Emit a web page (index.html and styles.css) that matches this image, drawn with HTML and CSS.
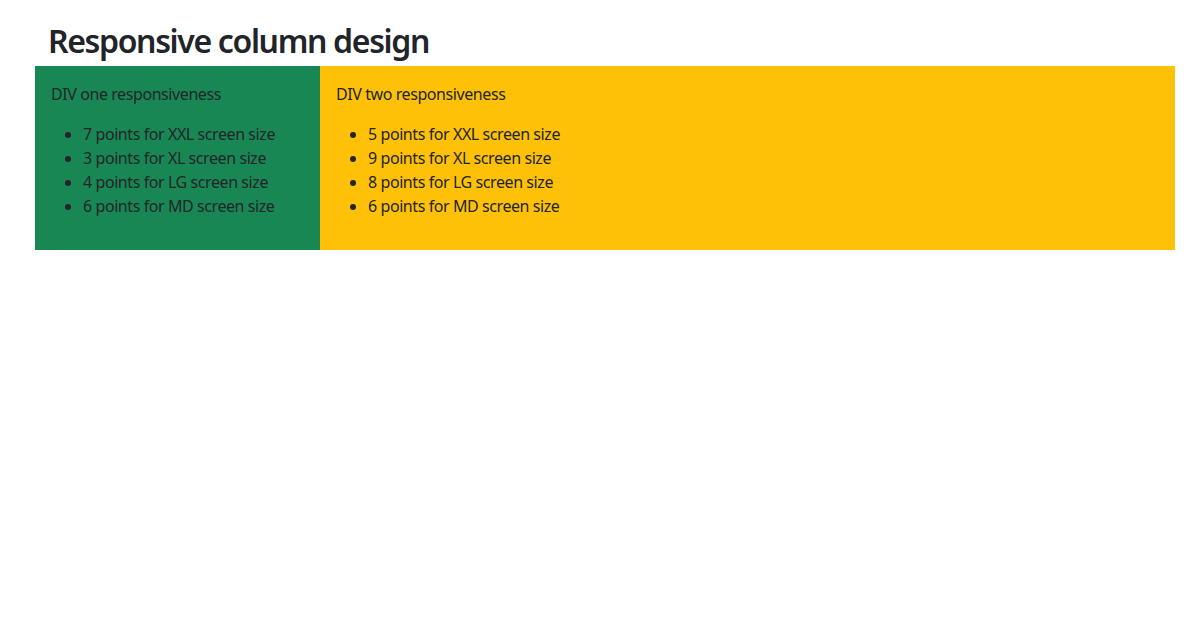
FILE: index.html
```html
<!DOCTYPE html>
<html lang="en">
<head>
<meta charset="utf-8">
<title>Responsive column design</title>
<link rel="stylesheet" href="styles.css">
</head>
<body>
<div class="container">
  <h2 class="title">Responsive column design</h2>
  <div class="row">
    <div class="col col-one">
      <p>DIV one responsiveness</p>
      <ul>
        <li>7 points for XXL screen size</li>
        <li>3 points for XL screen size</li>
        <li>4 points for LG screen size</li>
        <li>6 points for MD screen size</li>
      </ul>
    </div>
    <div class="col col-two">
      <p>DIV two responsiveness</p>
      <ul>
        <li>5 points for XXL screen size</li>
        <li>9 points for XL screen size</li>
        <li>8 points for LG screen size</li>
        <li>6 points for MD screen size</li>
      </ul>
    </div>
  </div>
</div>
</body>
</html>
```

FILE: styles.css
```css
html, body {
  margin: 0;
  padding: 0;
  background: #fff;
}
body {
  font-family: "Noto Sans", "Open Sans", sans-serif;
  font-size: 16px;
  line-height: 24px;
  letter-spacing: -0.42px;
  color: #212529;
}
.container {
  padding: 23px 13px 0 35px;
}
.title {
  margin: 0 0 8px 0;
  padding-left: 13px;
  font-size: 32px;
  line-height: 35px;
  font-weight: 600;
  letter-spacing: -1.35px;
}
.row {
  display: flex;
}
.col {
  padding: 16px;
  box-sizing: border-box;
}
.col p {
  margin: 0 0 16px 0;
}
.col ul {
  margin: 0 0 16px 0;
  padding-left: 32px;
}
.col-one {
  width: 285px;
  background: #198754;
}
.col-two {
  flex: 1;
  background: #ffc107;
}
```
